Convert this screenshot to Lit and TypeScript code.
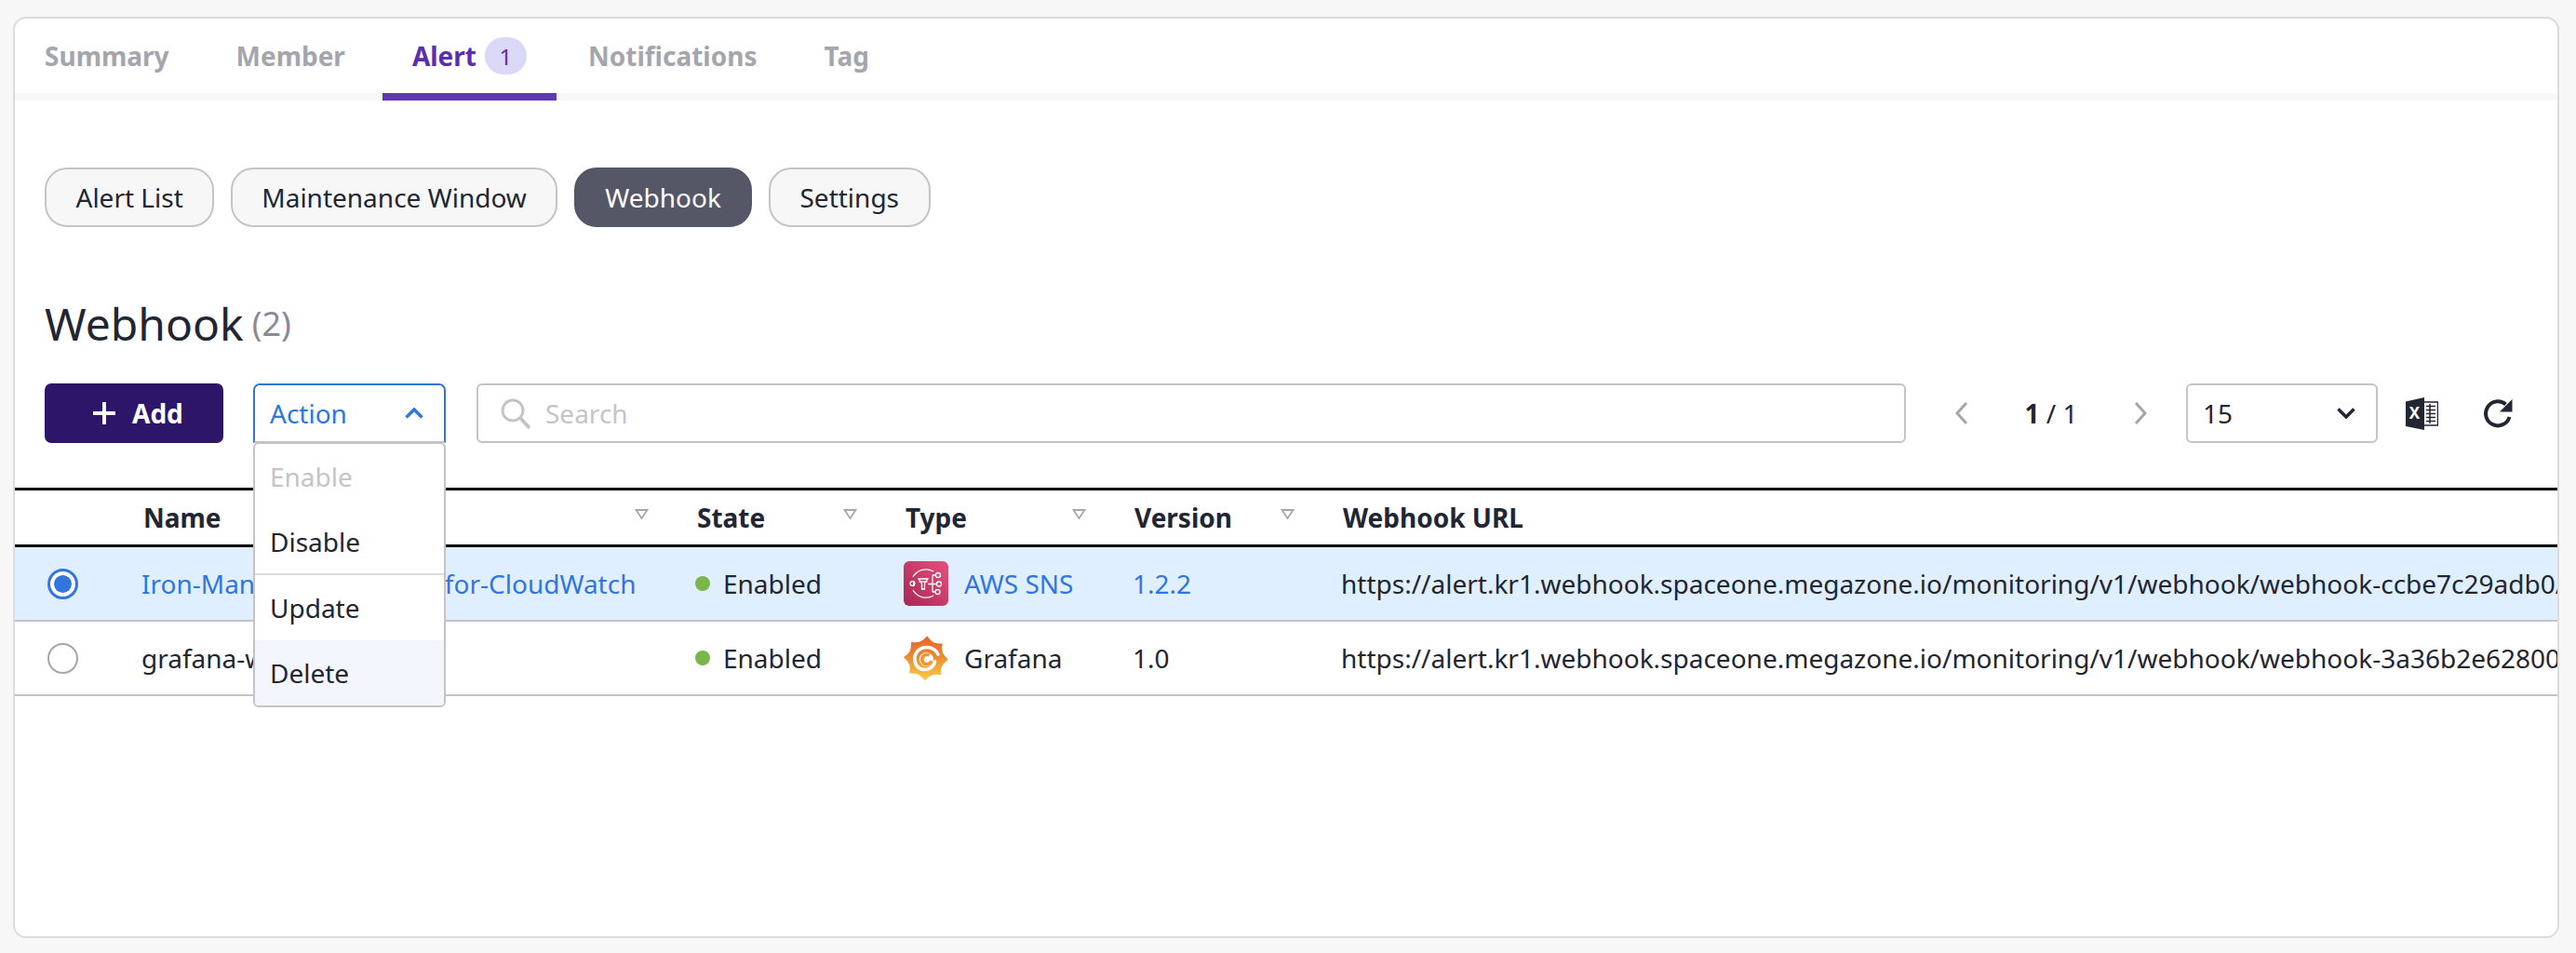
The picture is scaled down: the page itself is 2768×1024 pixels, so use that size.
import { LitElement, html, css } from 'lit';
import { customElement } from 'lit/decorators.js';

const sortArrow = html`<svg class="sort" width="15" height="11" viewBox="0 0 15 11"><path d="M1.500 1h12L7.500 10z" fill="none" stroke="#a5a5ae" stroke-width="1.800"/></svg>`;

// gear outline for the grafana logo, 8 rounded teeth around the centre
function gearPath(cx: number, cy: number, rIn: number, rOut: number, teeth: number) {
  const pts: string[] = [];
  const step = (Math.PI * 2) / teeth;
  for (let i = 0; i < teeth; i++) {
    const a = i * step - Math.PI / 2 + 0.05;
    const p = (ang: number, r: number) => `${(cx + Math.cos(ang) * r).toFixed(1)} ${(cy + Math.sin(ang) * r).toFixed(1)}`;
    pts.push(`${i === 0 ? 'M' : 'L'}${p(a - step * 0.5, rIn)}`);
    pts.push(`Q${p(a - step * 0.2, rIn + 1)} ${p(a, rOut)}`);
    pts.push(`Q${p(a + step * 0.2, rIn + 1)} ${p(a + step * 0.5, rIn)}`);
  }
  return pts.join(' ') + 'Z';
}

const awsIcon = html`<svg class="type-icon" width="48" height="48" viewBox="0 0 48 48">
  <defs><linearGradient id="aws" x1="0" y1="1" x2="1" y2="0"><stop offset="0" stop-color="#a82654"/><stop offset="1" stop-color="#e4527f"/></linearGradient></defs>
  <rect width="48" height="48" rx="6" fill="url(#aws)"/>
  <g fill="none" stroke="#fff" stroke-width="1.300">
    <path d="M32 11A16 16 0 0 0 10 17M10 31A16 16 0 0 0 32 37"/>
    <path d="M11 21A15 15 0 0 0 11 27"/>
    <circle cx="9.500" cy="24" r="2.400"/>
    <path d="M16 19h10l-3.500 5v6h-3v-6z"/>
    <path d="M16.500 22h9"/>
    <path d="M26 24.500h9.500M31 15v18M31 15h3.500M31 33h3"/>
    <circle cx="37" cy="15" r="2.500"/><circle cx="38" cy="24.500" r="2.500"/><circle cx="36.500" cy="33" r="2.500"/>
  </g>
</svg>`;

const grafanaIcon = html`<svg class="type-icon" width="48" height="48" viewBox="0 0 48 48">
  <defs><linearGradient id="gf" x1="0" y1="0" x2="0" y2="1"><stop offset="0" stop-color="#e5622e"/><stop offset="0.45" stop-color="#ea8a33"/><stop offset="1" stop-color="#f8d044"/></linearGradient></defs>
  <path d="${gearPath(24, 24.500, 19, 24, 8)}" fill="url(#gf)"/>
  <circle cx="24.500" cy="25.500" r="7.500" fill="#fff"/>
  <path d="M37 20C33 12 22 10 15.500 16C9.500 22 11 33 19 36C26 38 32 34 33.500 28" fill="none" stroke="#fff" stroke-width="3.600" stroke-linecap="round"/>
  <path d="M27.500 21A5.200 5.200 0 1 0 30 27" fill="none" stroke="#ee9433" stroke-width="3.600"/>
</svg>`;

const excelIcon = html`<svg width="35" height="35" viewBox="0 0 35 35">
  <path d="M0 4.500L20 0V35L0 31z" fill="#222532"/>
  <path d="M20 5h14.500v25H20" fill="none" stroke="#222532" stroke-width="1.500"/>
  <path d="M22 9.500h10M22 13.500h10M22 17.500h10M22 21.500h10M22 25.500h10M26 7v21" stroke="#222532" stroke-width="1.500" fill="none"/>
  <text class="excel-x" x="9.500" y="23" text-anchor="middle">X</text>
</svg>`;

const refreshIcon = html`<svg width="32" height="32" viewBox="0 0 32 32">
  <path d="M24.500 6.500A13 13 0 1 0 28.500 20" fill="none" stroke="#222532" stroke-width="4"/>
  <path d="M31.500 1v13.500H18z" fill="#222532"/>
</svg>`;

const rows = [
  {
    name: 'Iron-Man-SNS-Webhook-for-CloudWatch',
    selected: true,
    icon: awsIcon,
    type: 'AWS SNS',
    version: '1.2.2',
    url: 'https://alert.kr1.webhook.spaceone.megazone.io/monitoring/v1/webhook/webhook-ccbe7c29adb0/',
  },
  {
    name: 'grafana-webhook',
    selected: false,
    icon: grafanaIcon,
    type: 'Grafana',
    version: '1.0',
    url: 'https://alert.kr1.webhook.spaceone.megazone.io/monitoring/v1/webhook/webhook-3a36b2e62800',
  },
];

@customElement('app-root')
export class AppRoot extends LitElement {
  static styles = css`
    :host {
      display: block;
      box-sizing: border-box;
      height: 1024px;
      padding: 18px 18px 16px 14px;
      background: #f7f7f7;
      font-family: 'Noto Sans', sans-serif;
      font-size: 28px;
      color: #222532;
    }

    .card {
      box-sizing: border-box;
      height: 990px;
      background: #fff;
      border: 2px solid #dcdcde;
      border-radius: 14px;
      overflow: hidden;
    }

    .tabs {
      display: flex;
      height: 80px;
      border-bottom: 8px solid #f7f7f7;
    }
    .tab {
      display: flex;
      align-items: center;
      gap: 9px;
      height: 80px;
      padding: 0 32px;
      margin-right: 8px;
      border-bottom: 8px solid transparent;
      font-weight: 700;
      color: #a5a5ae;
    }
    .tab.active {
      margin-right: 2px;
      color: #5b2fab;
      border-bottom-color: #6138b0;
    }
    .badge {
      display: flex;
      align-items: center;
      justify-content: center;
      width: 45px;
      height: 40px;
      border-radius: 20px;
      background: #d9d9f7;
      font-size: 24px;
      font-weight: 400;
    }

    .content {
      padding-top: 72px;
    }
    .subnav {
      display: flex;
      gap: 17.5px;
      padding-left: 32px;
    }
    .subbtn {
      display: flex;
      align-items: center;
      box-sizing: border-box;
      height: 64px;
      padding: 0 31.5px;
      border: 2px solid #c4c4c8;
      border-radius: 24px;
      background: #f7f7f7;
    }
    .subbtn.active {
      background: #555666;
      border-color: #555666;
      color: #fff;
    }

    h2 {
      display: flex;
      align-items: center;
      gap: 9px;
      height: 68px;
      margin: 70px 0 0 32px;
      padding: 0;
      font-size: 48px;
      font-weight: 400;
      line-height: 68px;
    }
    h2 span {
      font-size: 36px;
      color: #8a8a96;
    }

    .toolbar {
      display: flex;
      align-items: center;
      height: 64px;
      margin-top: 30px;
      padding: 0 48px 0 32px;
    }
    .add {
      display: flex;
      align-items: center;
      gap: 17px;
      box-sizing: border-box;
      width: 192px;
      height: 64px;
      padding-left: 51px;
      border-radius: 7px;
      background: #2d1669;
      color: #fff;
      font-weight: 700;
    }
    .action {
      position: relative;
      box-sizing: border-box;
      display: flex;
      align-items: center;
      justify-content: space-between;
      width: 207px;
      height: 64px;
      margin-left: 32px;
      padding: 0 22px 0 16px;
      border: 2px solid #3076de;
      border-bottom-color: #c4c4c8;
      border-radius: 7px 7px 0 0;
      color: #3076de;
    }
    .menu {
      position: absolute;
      z-index: 5;
      top: 61px;
      left: -2px;
      box-sizing: border-box;
      width: 207px;
      height: 285px;
      background: #fff;
      border: 2px solid #c4c4c8;
      border-radius: 6px;
      color: #222532;
      overflow: hidden;
    }
    .menu-item {
      display: flex;
      align-items: center;
      height: 70px;
      padding-left: 16px;
    }
    .menu-item.disabled {
      color: #c4c4c8;
    }
    .menu-item.hover {
      background: #f3f6fc;
    }
    .menu-sep {
      height: 2px;
      margin-top: -1px;
      background: #dcdcde;
    }
    .search {
      flex: 1;
      display: flex;
      align-items: center;
      gap: 16px;
      box-sizing: border-box;
      height: 64px;
      margin-left: 33px;
      padding-left: 24px;
      border: 2px solid #c4c4c8;
      border-radius: 6px;
      color: #c4c4c8;
    }
    .pager {
      display: flex;
      align-items: center;
      justify-content: space-between;
      width: 208px;
      margin-left: 52px;
    }
    .pager b {
      font-weight: 700;
    }
    .select {
      display: flex;
      align-items: center;
      justify-content: space-between;
      box-sizing: border-box;
      width: 206px;
      height: 64px;
      margin-left: 41px;
      padding: 0 22px 0 16px;
      border: 2px solid #c4c4c8;
      border-radius: 6px;
    }
    .excel {
      display: flex;
      margin-left: 30px;
    }
    .refresh {
      display: flex;
      margin-left: 48px;
    }
    .excel-x {
      font-family: 'Noto Sans', sans-serif;
      font-size: 17px;
      font-weight: 700;
      fill: #fff;
    }

    .table {
      margin-top: 48px;
      overflow: hidden;
    }
    .row {
      display: grid;
      grid-template-columns: 120px 595px 224px 246px 224px 1399px;
      align-items: center;
      white-space: nowrap;
    }
    .head {
      box-sizing: border-box;
      height: 64px;
      border-top: 3px solid #000;
      border-bottom: 3px solid #000;
      font-weight: 700;
    }
    .head > div {
      display: flex;
      align-items: center;
      justify-content: space-between;
      padding: 0 34px 0 18px;
    }
    .sort {
      margin-bottom: 8px;
    }
    .body {
      box-sizing: border-box;
      height: 80px;
      border-bottom: 2px solid #c4c4c8;
    }
    .body.selected {
      background: #e0efff;
    }
    .body > div {
      display: flex;
      align-items: center;
      padding-left: 16px;
    }
    .body .radio-cell {
      padding-left: 35px;
    }
    .link {
      color: #3076de;
    }
    .dot {
      width: 16px;
      height: 16px;
      margin-right: 14px;
      border-radius: 50%;
      background: #7ab648;
    }
    .type-icon {
      flex: none;
      margin-right: 17px;
    }
  `;

  render() {
    return html`
      <div class="card">
        <div class="tabs">
          <div class="tab">Summary</div>
          <div class="tab">Member</div>
          <div class="tab active">Alert <span class="badge">1</span></div>
          <div class="tab">Notifications</div>
          <div class="tab">Tag</div>
        </div>
        <div class="content">
          <div class="subnav">
            <div class="subbtn">Alert List</div>
            <div class="subbtn">Maintenance Window</div>
            <div class="subbtn active">Webhook</div>
            <div class="subbtn">Settings</div>
          </div>
          <h2>Webhook <span>(2)</span></h2>
          ${this.renderToolbar()}
          ${this.renderTable()}
        </div>
      </div>
    `;
  }

  renderToolbar() {
    return html`
      <div class="toolbar">
        <div class="add">
          <svg width="26" height="26" viewBox="0 0 26 26"><path d="M13 1v24M1 13h24" stroke="#fff" stroke-width="4" fill="none"/></svg>
          Add
        </div>
        <div class="action">
          Action
          <svg width="20" height="12" viewBox="0 0 20 12"><path d="M1.500 10.500L10 2l8.500 8.500" stroke="#3076de" stroke-width="3.500" fill="none"/></svg>
          <div class="menu">
            <div class="menu-item disabled">Enable</div>
            <div class="menu-item">Disable</div>
            <div class="menu-sep"></div>
            <div class="menu-item">Update</div>
            <div class="menu-item hover">Delete</div>
          </div>
        </div>
        <div class="search">
          <svg width="32" height="33" viewBox="0 0 32 33"><circle cx="13" cy="13" r="11" fill="none" stroke="#c4c4c8" stroke-width="3"/><path d="M21 21l10 11" stroke="#c4c4c8" stroke-width="4" fill="none"/></svg>
          Search
        </div>
        <div class="pager">
          <svg width="16" height="26" viewBox="0 0 16 26"><path d="M13 2L3 13l10 11" stroke="#a5a5ae" stroke-width="3" fill="none"/></svg>
          <span><b>1</b> / 1</span>
          <svg width="16" height="26" viewBox="0 0 16 26"><path d="M3 2l10 11L3 24" stroke="#a5a5ae" stroke-width="3" fill="none"/></svg>
        </div>
        <div class="select">
          15
          <svg width="20" height="12" viewBox="0 0 20 12"><path d="M1.500 1.500L10 10l8.500-8.500" stroke="#222532" stroke-width="3.500" fill="none"/></svg>
        </div>
        <div class="excel">${excelIcon}</div>
        <div class="refresh">${refreshIcon}</div>
      </div>
    `;
  }

  renderTable() {
    return html`
      <div class="table">
        <div class="row head">
          <div></div>
          <div>Name ${sortArrow}</div>
          <div>State ${sortArrow}</div>
          <div>Type ${sortArrow}</div>
          <div>Version ${sortArrow}</div>
          <div>Webhook URL</div>
        </div>
        ${rows.map(
          (r) => html`
            <div class="row body ${r.selected ? 'selected' : ''}">
              <div class="radio-cell">
                ${r.selected
                  ? html`<svg width="33" height="33" viewBox="0 0 33 33"><circle cx="16.500" cy="16.500" r="15" fill="#fff" stroke="#3076de" stroke-width="3"/><circle cx="16.500" cy="16.500" r="9.500" fill="#3076de"/></svg>`
                  : html`<svg width="33" height="33" viewBox="0 0 33 33"><circle cx="16.500" cy="16.500" r="15.500" fill="#fff" stroke="#a5a5ae" stroke-width="2"/></svg>`}
              </div>
              <div class=${r.selected ? 'link' : ''}>${r.name}</div>
              <div><span class="dot"></span>Enabled</div>
              <div>${r.icon}<span class=${r.selected ? 'link' : ''}>${r.type}</span></div>
              <div class=${r.selected ? 'link' : ''}>${r.version}</div>
              <div>${r.url}</div>
            </div>
          `
        )}
      </div>
    `;
  }
}
